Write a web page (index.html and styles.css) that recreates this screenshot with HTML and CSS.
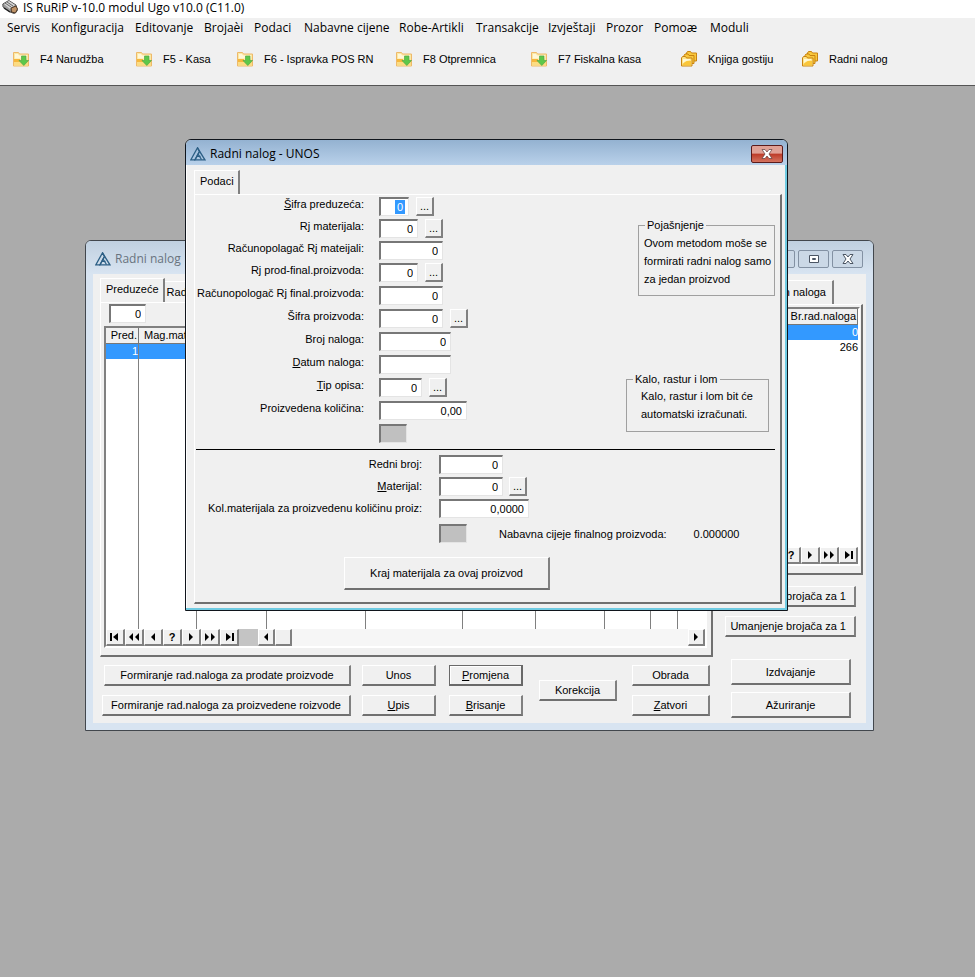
FILE: index.html
```html
<!DOCTYPE html>
<html lang="bs">
<head>
<meta charset="utf-8">
<title>IS RuRiP v-10.0 modul Ugo v10.0 (C11.0)</title>
<link rel="stylesheet" href="styles.css">
</head>
<body>
<svg class="defs" aria-hidden="true">
  <symbol id="download" viewBox="0 0 16 16">
    <path d="M.5 15V1.500h5l1 1.500h9v12z" fill="#fbe9a4" stroke="#eeb96a"/>
    <path d="M2 3h3l1 1.500h8v3H2z" fill="#fff7d8"/>
    <path d="M1 8h6v3H1z" fill="#f6b73c"/><path d="M1 11h14v3.500H1z" fill="#fbdc83"/>
    <path d="M8.500 5h4.500v4.500h2.500L10.800 14.500 6 9.500h2.500z" fill="#5cc84a" stroke="#52a845" stroke-width=".7"/>
  </symbol>
  <symbol id="folders" viewBox="0 0 16 16">
    <g stroke="#c98310" fill="#f8c83e">
      <path d="M5.500 10V2l1-1.500h3l1 1.500h5v8z"/>
      <path d="M3 12.500V4.500L4 3h3l1 1.500h5v8z"/>
      <path d="M.5 15V7l1-1.500h3l1 1.500h5.500v8z" fill="#fde58c"/>
    </g>
    <path d="M1.500 13l4-3H10v4.500H1.500z" fill="#fac63a"/>
    <path d="M2 8h7v1L4 10.500 2 12z" fill="#fff8d2"/>
  </symbol>
  <symbol id="logo" viewBox="0 0 16 14">
    <g fill="none" stroke="#2c5f85" stroke-width="1.300">
      <path d="M7.500.8L.9 12.800h4L9.500 4.500z"/>
      <path d="M7.500.8L14.900 12.800H5l2-3.500h3.500"/>
      <path d="M9.500 4.500L7 8.800M8 7l3.500 5.500"/>
    </g>
  </symbol>
  <symbol id="first" viewBox="0 0 12 10"><path d="M1 1h2v8H1zM9 1v8L4 5z"/></symbol>
  <symbol id="rewind" viewBox="0 0 12 10"><path d="M5 1v8L1 5zM11 1v8L7 5z"/></symbol>
  <symbol id="prev" viewBox="0 0 12 10"><path d="M8 1v8L4 5z"/></symbol>
  <symbol id="next" viewBox="0 0 12 10"><path d="M4 1v8l4-4z"/></symbol>
  <symbol id="forward" viewBox="0 0 12 10"><path d="M1 1v8l4-4zM7 1v8l4-4z"/></symbol>
  <symbol id="last" viewBox="0 0 12 10"><path d="M3 1v8l5-4zM9 1h2v8H9z"/></symbol>
</svg>

<div class="app">
  <header class="app-title">
    <svg class="app-icon" viewBox="0 0 16 14" aria-hidden="true">
      <path d="M.8 4l6-3.500L14 5l1.200 6-3 2.500L8 12 1 7z" fill="#9c9c9c" stroke="#555"/>
      <path d="M2 4l5-3 6 4-5 4z" fill="#d6d6d6"/><path d="M3 3l6 4M5 2l6 4" stroke="#666"/>
      <path d="M9 8l5-2 1.500 3-2 4-4-1z" fill="#c09468" stroke="#4b3828"/>
      <path d="M2 8l6 4" stroke="#222" stroke-width="1.500"/>
    </svg>
    <span>IS RuRiP v-10.0 modul Ugo v10.0 (C11.0)</span>
  </header>
  <nav class="menu">
    <a href="#">Servis</a><a href="#">Konfiguracija</a><a href="#">Editovanje</a><a href="#">Brojaèi</a><a href="#">Podaci</a><a href="#">Nabavne cijene</a><a href="#">Robe-Artikli</a><a href="#">Transakcije</a><a href="#">Izvještaji</a><a href="#">Prozor</a><a href="#">Pomoæ</a><a href="#">Moduli</a>
  </nav>
  <div class="toolbar">
    <button class="tool"><svg><use href="#download"/></svg>F4 Narudžba</button>
    <button class="tool"><svg><use href="#download"/></svg>F5 - Kasa</button>
    <button class="tool"><svg><use href="#download"/></svg>F6 - Ispravka POS RN</button>
    <button class="tool"><svg><use href="#download"/></svg>F8 Otpremnica</button>
    <button class="tool"><svg><use href="#download"/></svg>F7 Fiskalna kasa</button>
    <button class="tool"><svg><use href="#folders"/></svg>Knjiga gostiju</button>
    <button class="tool"><svg><use href="#folders"/></svg>Radni nalog</button>
  </div>

  <main class="desktop">
    <section class="window list-window">
      <div class="window-title">
        <svg class="logo"><use href="#logo"/></svg><span>Radni nalog</span>
        <div class="caption-buttons">
          <button class="caption" aria-label="Minimize"><svg viewBox="0 0 12 10"><path d="M2 6h8v2H2z" fill="#fff" stroke="#4b5563"/></svg></button>
          <button class="caption" aria-label="Maximize"><svg viewBox="0 0 12 10"><path d="M1.500 1.500h9v7h-9z" fill="#fff" stroke="#4b5563"/><path d="M4.500 4.500h3v1h-3z" fill="none" stroke="#4b5563"/></svg></button>
          <button class="caption" aria-label="Close"><svg viewBox="0 0 12 10"><path d="M1 .5h3l2 2.500L8 .5h3L8 5l3 4.500H8L6 7 4 9.500H1L4 5z" fill="#fff" stroke="#4b5563"/></svg></button>
        </div>
      </div>
      <div class="list-body">
        <div class="left">
          <div class="tabs"><button class="tab active">Preduzeće</button><button class="tab">Rad</button></div>
          <div class="panel grid-panel">
            <input class="field w37" type="text" value="0" aria-label="Preduzeće">
            <div class="grid-box">
              <table class="data orders">
                <thead><tr><th class="c33">Pred.</th><th class="c58">Mag.mat</th><th class="c70"></th><th class="c99"></th><th class="c97"></th><th class="c73"></th><th class="c69"></th><th class="c46"></th><th class="c27"></th><th></th></tr></thead>
                <tbody>
                  <tr class="selected"><td>1</td><td></td><td></td><td></td><td></td><td></td><td></td><td></td><td></td><td></td></tr>
                  <tr class="filler"><td></td><td></td><td></td><td></td><td></td><td></td><td></td><td></td><td></td><td></td></tr>
                </tbody>
              </table>
              <div class="navigator">
                <button aria-label="Prvi"><svg><use href="#first"/></svg></button>
                <button aria-label="Stranica nazad"><svg><use href="#rewind"/></svg></button>
                <button aria-label="Prethodni"><svg><use href="#prev"/></svg></button>
                <button>?</button>
                <button aria-label="Sljedeći"><svg><use href="#next"/></svg></button>
                <button aria-label="Stranica naprijed"><svg><use href="#forward"/></svg></button>
                <button aria-label="Zadnji"><svg><use href="#last"/></svg></button>
                <span class="spacer"></span>
                <button class="narrow" aria-label="Lijevo"><svg><use href="#prev"/></svg></button>
                <span class="track"><span class="thumb"></span></span>
                <button class="narrow" aria-label="Desno"><svg><use href="#next"/></svg></button>
              </div>
            </div>
          </div>
          <div class="actions">
            <div class="stack wide"><button class="btn short">Formiranje rad.naloga za prodate proizvode</button><button class="btn">Formiranje rad.naloga za proizvedene roizvode</button></div>
            <div class="stack second"><button class="btn">Unos</button><button class="btn"><u>U</u>pis</button></div>
            <div class="stack third"><button class="btn default"><u>P</u>romjena</button><button class="btn"><u>B</u>risanje</button></div>
            <div class="stack fourth"><button class="btn">Korekcija</button></div>
            <div class="stack fifth"><button class="btn">Obrada</button><button class="btn"><u>Z</u>atvori</button></div>
          </div>
        </div>
        <div class="right">
          <div class="tabs"><button class="tab last-tab">n naloga</button></div>
          <div class="panel counter-panel">
            <div class="grid-box">
              <table class="data counters">
                <thead><tr><th>Br.rad.naloga</th></tr></thead>
                <tbody><tr class="selected"><td>0</td></tr><tr><td>266</td></tr><tr class="filler"><td></td></tr></tbody>
              </table>
              <div class="navigator end">
                <button>?</button>
                <button aria-label="Sljedeći"><svg><use href="#next"/></svg></button>
                <button aria-label="Stranica naprijed"><svg><use href="#forward"/></svg></button>
                <button aria-label="Zadnji"><svg><use href="#last"/></svg></button>
              </div>
            </div>
          </div>
          <div class="stack counter-actions"><button class="btn">brojača za 1</button><button class="btn">Umanjenje brojača za 1</button></div>
          <div class="stack side-actions"><button class="btn">Izdvajanje</button><button class="btn">Ažuriranje</button></div>
        </div>
      </div>
    </section>

    <section class="window dialog">
      <div class="window-title">
        <svg class="logo"><use href="#logo"/></svg><span>Radni nalog - UNOS</span>
        <button class="close" aria-label="Zatvori"><svg viewBox="0 0 12 10"><path d="M1 .5h3l2 2.500L8 .5h3L8 5l3 4.500H8L6 7 4 9.500H1L4 5z" fill="#fff" stroke="#5c3a3a" stroke-width=".7"/></svg></button>
      </div>
      <div class="dialog-body">
        <div class="tabs"><button class="tab active">Podaci</button></div>
        <form class="panel form-panel">
          <div class="upper">
            <div class="rows">
              <div class="row tight"><label for="f1"><u>Š</u>ifra preduzeća:</label><span class="field w30 focused"><input id="f1" type="text" value="0"></span><button type="button" class="more">...</button></div>
              <div class="row tight"><label for="f2">Rj materijala:</label><input class="field w39" id="f2" type="text" value="0"><button type="button" class="more">...</button></div>
              <div class="row tight"><label for="f3">Računopolagač Rj mateijali:</label><input class="field w64" id="f3" type="text" value="0"></div>
              <div class="row"><label for="f4">Rj prod-final.proizvoda:</label><input class="field w39" id="f4" type="text" value="0"><button type="button" class="more">...</button></div>
              <div class="row"><label for="f5">Računopologač Rj final.proizvoda:</label><input class="field w64" id="f5" type="text" value="0"></div>
              <div class="row"><label for="f6">Šifra proizvoda:</label><input class="field w64" id="f6" type="text" value="0"><button type="button" class="more">...</button></div>
              <div class="row"><label for="f7">Broj naloga:</label><input class="field w72" id="f7" type="text" value="0"></div>
              <div class="row"><label for="f8"><u>D</u>atum naloga:</label><input class="field w72" id="f8" type="text" value=""></div>
              <div class="row"><label for="f9"><u>T</u>ip opisa:</label><input class="field w43" id="f9" type="text" value="0"><button type="button" class="more">...</button></div>
              <div class="row"><label for="f10">Proizvedena količina:</label><input class="field w88" id="f10" type="text" value="0,00"></div>
              <div class="row"><span class="label-space"></span><span class="field w28 locked"></span></div>
            </div>
            <div class="notes">
              <fieldset class="note"><legend>Pojašnjenje</legend><p>Ovom metodom moše se<br>formirati radni nalog samo<br>za jedan proizvod</p></fieldset>
              <fieldset class="note loss"><legend>Kalo, rastur i lom</legend><p>Kalo, rastur i lom bit će<br>automatski izračunati.</p></fieldset>
            </div>
          </div>
          <hr>
          <div class="rows lower">
            <div class="row tight"><label for="m1">Redni broj:</label><input class="field w64" id="m1" type="text" value="0"></div>
            <div class="row tight"><label for="m2"><u>M</u>aterijal:</label><input class="field w64" id="m2" type="text" value="0"><button type="button" class="more">...</button></div>
            <div class="row"><label for="m3">Kol.materijala za proizvedenu količinu proiz:</label><input class="field w90" id="m3" type="text" value="0,0000"></div>
            <div class="row price"><span class="label-space"></span><span class="field w28 locked"></span><span class="price-label">Nabavna cijeje finalnog proizvoda:</span><output>0.000000</output></div>
          </div>
          <button type="button" class="btn finish">Kraj materijala za ovaj proizvod</button>
        </form>
      </div>
    </section>
  </main>
</div>
</body>
</html>
```

FILE: styles.css
```css
* { box-sizing: border-box; }
body { margin: 0; font: 11px/14px "Liberation Sans", Arial, sans-serif; color: #000; background: #ababab; }
button, input { font: inherit; color: inherit; margin: 0; padding: 0; border: 0; border-radius: 0; background: none; }
a { color: inherit; text-decoration: none; }
.defs { position: absolute; width: 0; height: 0; }
.app { min-height: 100vh; display: flex; flex-direction: column; }

.app-title { height: 18px; background: #fff; display: flex; align-items: flex-start; gap: 5px; padding-left: 2px; font: 12px/16px "Open Sans", sans-serif; }
.app-icon { width: 16px; height: 14px; }
.menu { height: 22px; padding: 0 0 2px 7px; background: #f0f0f0; display: grid; grid-template-columns: 44px 84px 69px 50px 50px 95px 77px 72px 58px 48px 56px auto; align-items: center; font: 12px/18px "Open Sans", sans-serif; white-space: nowrap; }
.toolbar { height: 46px; padding: 0 0 7px 13px; background: #f0f0f0; border-bottom: 1px solid #555; display: grid; grid-template-columns: 123px 101px 159px 135px 150px 121px auto; align-items: center; }
.tool { display: flex; align-items: center; gap: 11px; white-space: nowrap; }
.tool svg { width: 16px; height: 16px; }

.desktop { flex: 1; position: relative; background: #ababab; }
.window { position: absolute; background: #f0f0f0; border-radius: 6px 6px 0 0; display: flex; flex-direction: column; }
.window-title { display: flex; align-items: center; gap: 4px; font: 12px/16px "Open Sans", sans-serif; }
.logo { width: 16px; height: 14px; flex: none; }

.list-window { left: 85px; top: 154px; width: 789px; height: 491px; border: 1px solid #42474d; padding: 0 7px 7px; background: #d8e4f1; }
.list-window .window-title { height: 33px; margin: 0 -7px; padding: 3px 10px 0 9px; color: #69737e; background: linear-gradient(#c0d0e0, #d8e4f1); border-radius: 5px 5px 0 0; }
.caption-buttons { margin-left: auto; display: flex; gap: 3px; }
.caption { width: 31px; height: 18px; border: 1px solid #8391a3; border-radius: 2px; background: #cbd8e6; display: flex; align-items: center; justify-content: center; }
.caption svg, .close svg { width: 12px; height: 10px; }
.list-body { flex: 1; padding: 0 3px 0 7px; background: #f0f0f0; display: flex; gap: 12px; }
.left { width: 613px; padding-top: 4px; }
.right { flex: 1; padding-top: 6px; }

.tabs { height: 24px; display: flex; align-items: flex-end; }
.tab { height: 21px; padding: 0 2px; border-right: 2px solid #808080; border-top: 1px solid #fff; white-space: nowrap; }
.tab.active { height: 24px; padding: 0 4px 4px; padding-left: 5px; border-left: 1px solid #fff; }
.tab.last-tab { width: 109px; height: 24px; padding: 0 6px 2px; text-align: right; }
.panel { border: solid; border-width: 1px 2px 2px 1px; border-color: #fff #707070 #707070 #fff; display: flex; flex-direction: column; }
.grid-panel { height: 355px; padding: 1px 4px 7px 3px; gap: 3px; }
.grid-panel .field { margin-left: 5px; }
.counter-panel { height: 271px; padding: 2px 1px 7px 3px; }
.grid-box { flex: 1; border: 2px solid; border-color: #808080 #fff #fff #808080; background: #fff; display: flex; flex-direction: column; }

.data { flex: 1; width: 100%; height: 1px; border-collapse: separate; border-spacing: 0; table-layout: fixed; }
.data th { height: 16px; padding: 0 1px; background: #f0f0f0; border: solid; border-width: 0 1px 1px 0; border-color: #777; font-weight: normal; line-height: 15px; white-space: nowrap; overflow: hidden; text-align: right; }
.data td { height: 15px; padding: 0; line-height: 15px; text-align: right; border-right: 1px solid #808080; }
.orders th + th { padding-left: 5px; text-align: left; }
.orders td:last-child, .counters td { border-right: 0; }
.selected { background: #3399ff; color: #fff; }
.filler td { height: auto; }
.c33 { width: 33px; }
.c58 { width: 58px; }
.c70 { width: 70px; }
.c99 { width: 99px; }
.c97 { width: 97px; }
.c73 { width: 73px; }
.c69 { width: 69px; }
.c46 { width: 46px; }
.c27 { width: 27px; }

.navigator { height: 17px; display: flex; }
.navigator.end { justify-content: flex-end; }
.navigator button, .thumb { width: 19px; flex: none; border: solid; border-width: 1px 2px 2px 1px; border-color: #fff #808080 #808080 #fff; background: #f0f0f0; font-weight: bold; display: flex; align-items: center; justify-content: center; }
.navigator button.narrow, .thumb { width: 17px; }
.navigator svg { width: 12px; height: 10px; }
.spacer { width: 19px; background: #c4c4c4; }
.track { flex: 1; display: flex; background: #f6f6f6; }

.btn { height: 21px; width: 100%; border: solid; border-width: 1px 2px 2px 1px; border-color: #fff #808080 #707070 #fff; background: #f0f0f0; white-space: nowrap; }
.btn.default { border: 2px solid #696969; border-top-width: 1px; border-left-width: 1px; box-shadow: inset 1px 1px #fff; }
.actions { display: flex; padding: 8px 0 0 4px; }
.stack { display: flex; flex-direction: column; gap: 9px; }
.wide { width: 249px; margin-left: -2px; }
.wide .short { width: 247px; align-self: flex-end; }
.second { width: 74px; margin-left: 11px; }
.third { width: 74px; margin-left: 13px; }
.fourth { width: 78px; margin-left: 16px; justify-content: center; }
.fifth { width: 78px; margin-left: 15px; }
.counter-actions { width: 131px; margin-top: 11px; }
.counter-actions .btn { text-align: right; padding-right: 8px; }
.side-actions { width: 120px; margin: 22px 0 0 6px; gap: 7px; }
.side-actions .btn { height: 26px; }

.dialog { left: 185px; top: 53px; width: 603px; height: 472px; border: 1px solid #10151c; box-shadow: inset -2px -2px #6fcbe2, inset 1px 0 #fff; }
.dialog .window-title { height: 25px; padding: 2px 4px 0; background: linear-gradient(#94b2d1, #b9d1ea); border-radius: 5px 5px 0 0; }
.close { width: 32px; height: 18px; margin-left: auto; border: 1px solid #5b1b1b; border-radius: 2px; background: linear-gradient(#e0a196 0 45%, #bd3a28 50%, #d4735f); display: flex; align-items: center; justify-content: center; }
.dialog-body { flex: 1; padding: 5px 5px 6px 8px; display: flex; flex-direction: column; }
.form-panel { flex: 1; padding: 0 5px 0 1px; }
.upper { display: flex; justify-content: space-between; }
.rows { flex: 1; padding-top: 2px; }
.row { height: 23px; display: flex; align-items: flex-start; }
.row.tight { height: 22px; }
.row label, .label-space { width: 168px; margin-right: 15px; text-align: right; white-space: nowrap; }
.field { height: 19px; padding: 0 4px 0 0; flex: none; border: solid; border-width: 2px 1px 1px 2px; border-color: #777 #e4e4e4 #e4e4e4 #777; background: #fff; text-align: right; }
.focused { display: flex; justify-content: flex-end; padding: 1px 3px 1px 0; }
.focused input { width: 10px; text-align: center; background: #3399ff; color: #fff; }
.locked { background: #c0c0c0; }
.more { width: 18px; height: 19px; margin-left: 7px; border: solid; border-width: 1px 2px 2px 1px; border-color: #fff #808080 #808080 #fff; background: #f0f0f0; line-height: 14px; }
.w28 { width: 28px; }
.w30 { width: 30px; }
.w37 { width: 37px; }
.w39 { width: 39px; }
.w43 { width: 43px; }
.w64 { width: 64px; }
.w72 { width: 72px; }
.w88 { width: 88px; }
.w90 { width: 90px; }

.notes { padding-top: 23px; display: flex; flex-direction: column; align-items: flex-end; }
.note { width: 137px; height: 78px; margin: 0; padding: 2px 0 0 5px; border: 1px solid #a0a0a0; white-space: nowrap; line-height: 18px; }
.note legend { margin-left: 1px; padding: 0 2px; line-height: 14px; }
.note p { margin: 0; }
.note.loss { width: 143px; height: 60px; margin: 76px 6px 0 0; padding: 1px 0 0 14px; }
.note.loss legend { margin-left: -8px; }
hr { width: 100%; height: 1px; margin: 2px 0 0; border: 0; background: #000; }
.lower { flex: none; padding-top: 5px; }
.lower label, .lower .label-space { width: 226px; margin-right: 17px; padding-top: 2px; }
.lower .more { margin-left: 6px; }
.lower .price { align-items: center; }
.price-label { margin-left: 32px; }
.price output { margin-left: 27px; }
.finish { width: 206px; height: 33px; margin: 12px 0 0 148px; }
```
